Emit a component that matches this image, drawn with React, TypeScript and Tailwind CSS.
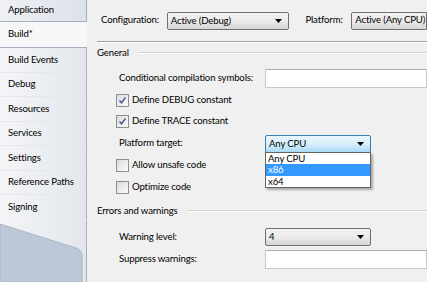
import React from "react";

const tabs = [
  "Application",
  "Build*",
  "Build Events",
  "Debug",
  "Resources",
  "Services",
  "Settings",
  "Reference Paths",
  "Signing",
];

function Arrow() {
  return (
    <svg width="7" height="4" viewBox="0 0 7 4" className="shrink-0">
      <path d="M0 0H7L3.5 4Z" fill="#000" />
    </svg>
  );
}

function Combo({ value, w, focused }: { value: string; w: string; focused?: boolean }) {
  return (
    <div
      className={
        "flex h-[18px] items-center justify-between rounded-[2px] border pl-[3px] pr-[6px] " +
        w +
        (focused
          ? " border-[#3c7fb1] bg-gradient-to-b from-[#eaf6fd] via-[#d9f0fc] to-[#a7d9f5]"
          : " border-[#707070] bg-gradient-to-b from-[#f2f2f2] via-[#ebebeb] to-[#d5d5d5]")
      }
    >
      <span className="leading-none">{value}</span>
      <Arrow />
    </div>
  );
}

function Check({ on }: { on?: boolean }) {
  return (
    <div className="flex h-[13px] w-[13px] shrink-0 items-center justify-center border border-[#8e8f8f] bg-gradient-to-br from-[#dcdcdc] to-[#fbfbfb]">
      {on && (
        <svg width="9" height="9" viewBox="0 0 9 9">
          <path d="M1.5 4.5L3.5 6.8L7.5 1.5" fill="none" stroke="#4a5f97" strokeWidth="1.6" />
        </svg>
      )}
    </div>
  );
}

function TextBox() {
  return <div className="h-[19px] flex-1 border border-[#c5c9cf] border-t-[#abadb3] bg-white" />;
}

function Header({ label }: { label: string }) {
  return (
    <div className="flex h-4 items-center gap-[9px]">
      <span>{label}</span>
      <div className="h-[2px] flex-1 border-t border-b border-t-[#d5d5d5] border-b-white" />
    </div>
  );
}

export default function App() {
  return (
    <div
      className="flex h-[282px] w-[427px] overflow-hidden whitespace-nowrap bg-[#f0f0f0] text-[9.6px] tracking-[-0.15px] text-black"
      style={{ fontFamily: 'Lato, "Liberation Sans", sans-serif' }}
    >
      <div className="relative w-[87px] shrink-0 bg-gradient-to-r from-[#f4f5f7] to-[#e2e6ec]">
        <div className="flex flex-col">
          {tabs.map((t, i) =>
            i === 1 ? (
              <div key={t} className="flex h-[25px] items-center bg-[#f7f7f7] pl-2 pr-2">
                {t}
              </div>
            ) : i === 0 ? (
              <div
                key={t}
                className="flex h-[22px] items-center border-r border-b border-[#a5afbf] bg-gradient-to-r from-[#eef0f4] to-[#dde2ea] pl-2"
              >
                {t}
              </div>
            ) : (
              <div
                key={t}
                className={
                  "flex h-[24.5px] items-center border-r border-r-[#a5afbf] pl-2 " +
                  (i === 2 ? "border-t border-t-[#a5afbf]" : "border-t border-t-[#e4e7ec]")
                }
              >
                {t}
              </div>
            )
          )}
        </div>
        <div className="absolute inset-x-0 bottom-0 top-[220px] border-r border-[#a5afbf]">
          <svg width="86" height="62" viewBox="0 0 86 62" className="absolute left-0 top-0">
            <path d="M0 4L76 28Q82 30 82 36V62H0Z" fill="#bcc7d7" stroke="#a9b5c6" strokeWidth="1" />
          </svg>
        </div>
      </div>

      <div className="flex min-w-0 flex-1 flex-col pl-[10px]">
        <div className="flex h-[41px] items-center pl-[4px]">
          <span className="w-[66px]">Configuration:</span>
          <Combo value="Active (Debug)" w="w-[123px]" />
          <span className="ml-4 w-[46px]">Platform:</span>
          <div className="flex h-[18px] w-[76px] items-center overflow-hidden rounded-l-[2px] border border-[#707070] bg-gradient-to-b from-[#f2f2f2] via-[#ebebeb] to-[#d5d5d5] pl-[3px]">
            Active (Any CPU)
          </div>
        </div>
        <div className="h-[2px] border-t border-b border-t-[#a0a0a0] border-b-white" />
        <div className="mt-[2px]">
          <Header label="General" />
        </div>
        <div className="mt-[6px] flex flex-col pl-[22px]">
          <div className="flex h-[22px] items-center">
            <span className="w-[146px]">Conditional compilation symbols:</span>
            <TextBox />
          </div>
          <div className="-ml-[3px] flex h-[22px] items-center gap-[2px]">
            <Check on />
            <span className="ml-[1px]">Define DEBUG constant</span>
          </div>
          <div className="-ml-[3px] flex h-[21px] items-center gap-[2px]">
            <Check on />
            <span className="ml-[1px]">Define TRACE constant</span>
          </div>
          <div className="relative flex h-[23px] items-center">
            <span className="w-[146px]">Platform target:</span>
            <Combo value="Any CPU" w="w-[106px]" focused />
            <div className="absolute left-[146px] top-[20px] z-10 w-[106px] border border-[#646464] bg-white shadow-[2px_2px_2px_rgba(0,0,0,0.3)]">
              <div className="flex h-[11px] items-center pl-[2px] leading-none">Any CPU</div>
              <div className="flex h-[12px] items-center bg-[#3399ff] pl-[2px] leading-none text-white">x86</div>
              <div className="flex h-[11px] items-center pl-[2px] leading-none">x64</div>
            </div>
          </div>
          <div className="-ml-[3px] flex h-[21px] items-center gap-[2px]">
            <Check />
            <span className="ml-[1px]">Allow unsafe code</span>
          </div>
          <div className="-ml-[3px] flex h-[22px] items-center gap-[2px]">
            <Check />
            <span className="ml-[1px]">Optimize code</span>
          </div>
        </div>
        <div className="mt-[5px]">
          <Header label="Errors and warnings" />
        </div>
        <div className="mt-[7px] flex flex-col pl-[22px]">
          <div className="flex h-[22px] items-center">
            <span className="w-[146px]">Warning level:</span>
            <Combo value="4" w="w-[106px]" />
          </div>
          <div className="flex h-[22px] items-center">
            <span className="w-[146px]">Suppress warnings:</span>
            <TextBox />
          </div>
        </div>
      </div>
    </div>
  );
}
